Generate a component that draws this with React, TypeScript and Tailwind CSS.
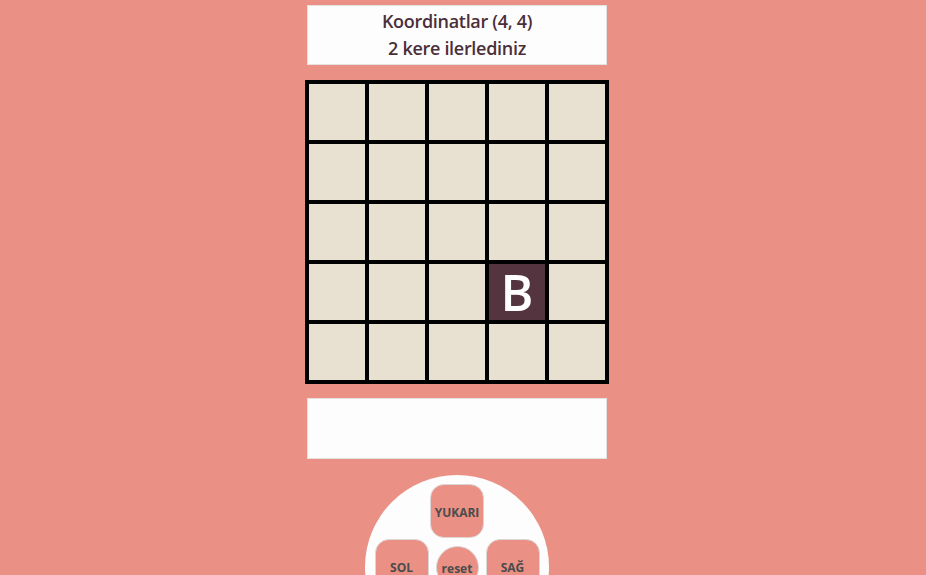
import React from "react";

export default function App() {
  const rows = [0, 1, 2, 3, 4];
  const cols = [0, 1, 2, 3, 4];
  const font = { fontFamily: '"Open Sans", "Noto Sans", sans-serif' };
  const btn =
    "w-[54px] h-[54px] rounded-[14px] bg-[#ea9085] border border-[#dcd6d6] text-[#4b4b4b] text-[12px] font-bold flex items-center justify-center pt-[3px]";
  return (
    <div className="h-[575px] w-full bg-[#ea9085] flex flex-col items-center overflow-hidden pr-[12px]" style={font}>
      <div className="mt-[5px] w-[300px] h-[60px] shrink-0 bg-[#fdfdfd] border border-[#e6e0e0] flex flex-col items-center justify-center text-[#4a2f3a] text-[18px] font-semibold leading-[27px] tracking-[-0.3px]">
        <div>Koordinatlar (4, 4)</div>
        <div>2 kere ilerlediniz</div>
      </div>
      <div className="mt-[15px] shrink-0 border-2 border-black grid grid-cols-5 w-[304px]">
        {rows.map((r) =>
          cols.map((c) => {
            const active = r === 3 && c === 3;
            return (
              <div
                key={`${r}-${c}`}
                className={`w-[60px] h-[60px] border-2 border-black flex items-center justify-center ${
                  active ? "bg-[#53343f]" : "bg-[#e8e1d1]"
                }`}
              >
                {active && (
                  <span className="text-white text-[50px] font-semibold leading-none">
                    B
                  </span>
                )}
              </div>
            );
          })
        )}
      </div>
      <div className="mt-[14px] shrink-0 w-[300px] h-[61px] bg-[#fdfdfd] border border-[#e6e0e0]" />
      <div className="mt-[16px] w-[184px] h-[184px] rounded-full bg-[#fdfdfd] flex flex-col items-center pt-[9px] shrink-0">
        <button className={btn}>YUKARI</button>
        <div className="flex items-start gap-[7px] mt-px">
          <button className={btn}>SOL</button>
          <button className="mt-[7px] w-[43px] h-[43px] rounded-full bg-[#ea9085] border border-[#dcd6d6] text-[#4b4b4b] text-[12px] font-bold flex items-center justify-center pt-[3px]">
            reset
          </button>
          <button className={btn}>SAĞ</button>
        </div>
      </div>
    </div>
  );
}
